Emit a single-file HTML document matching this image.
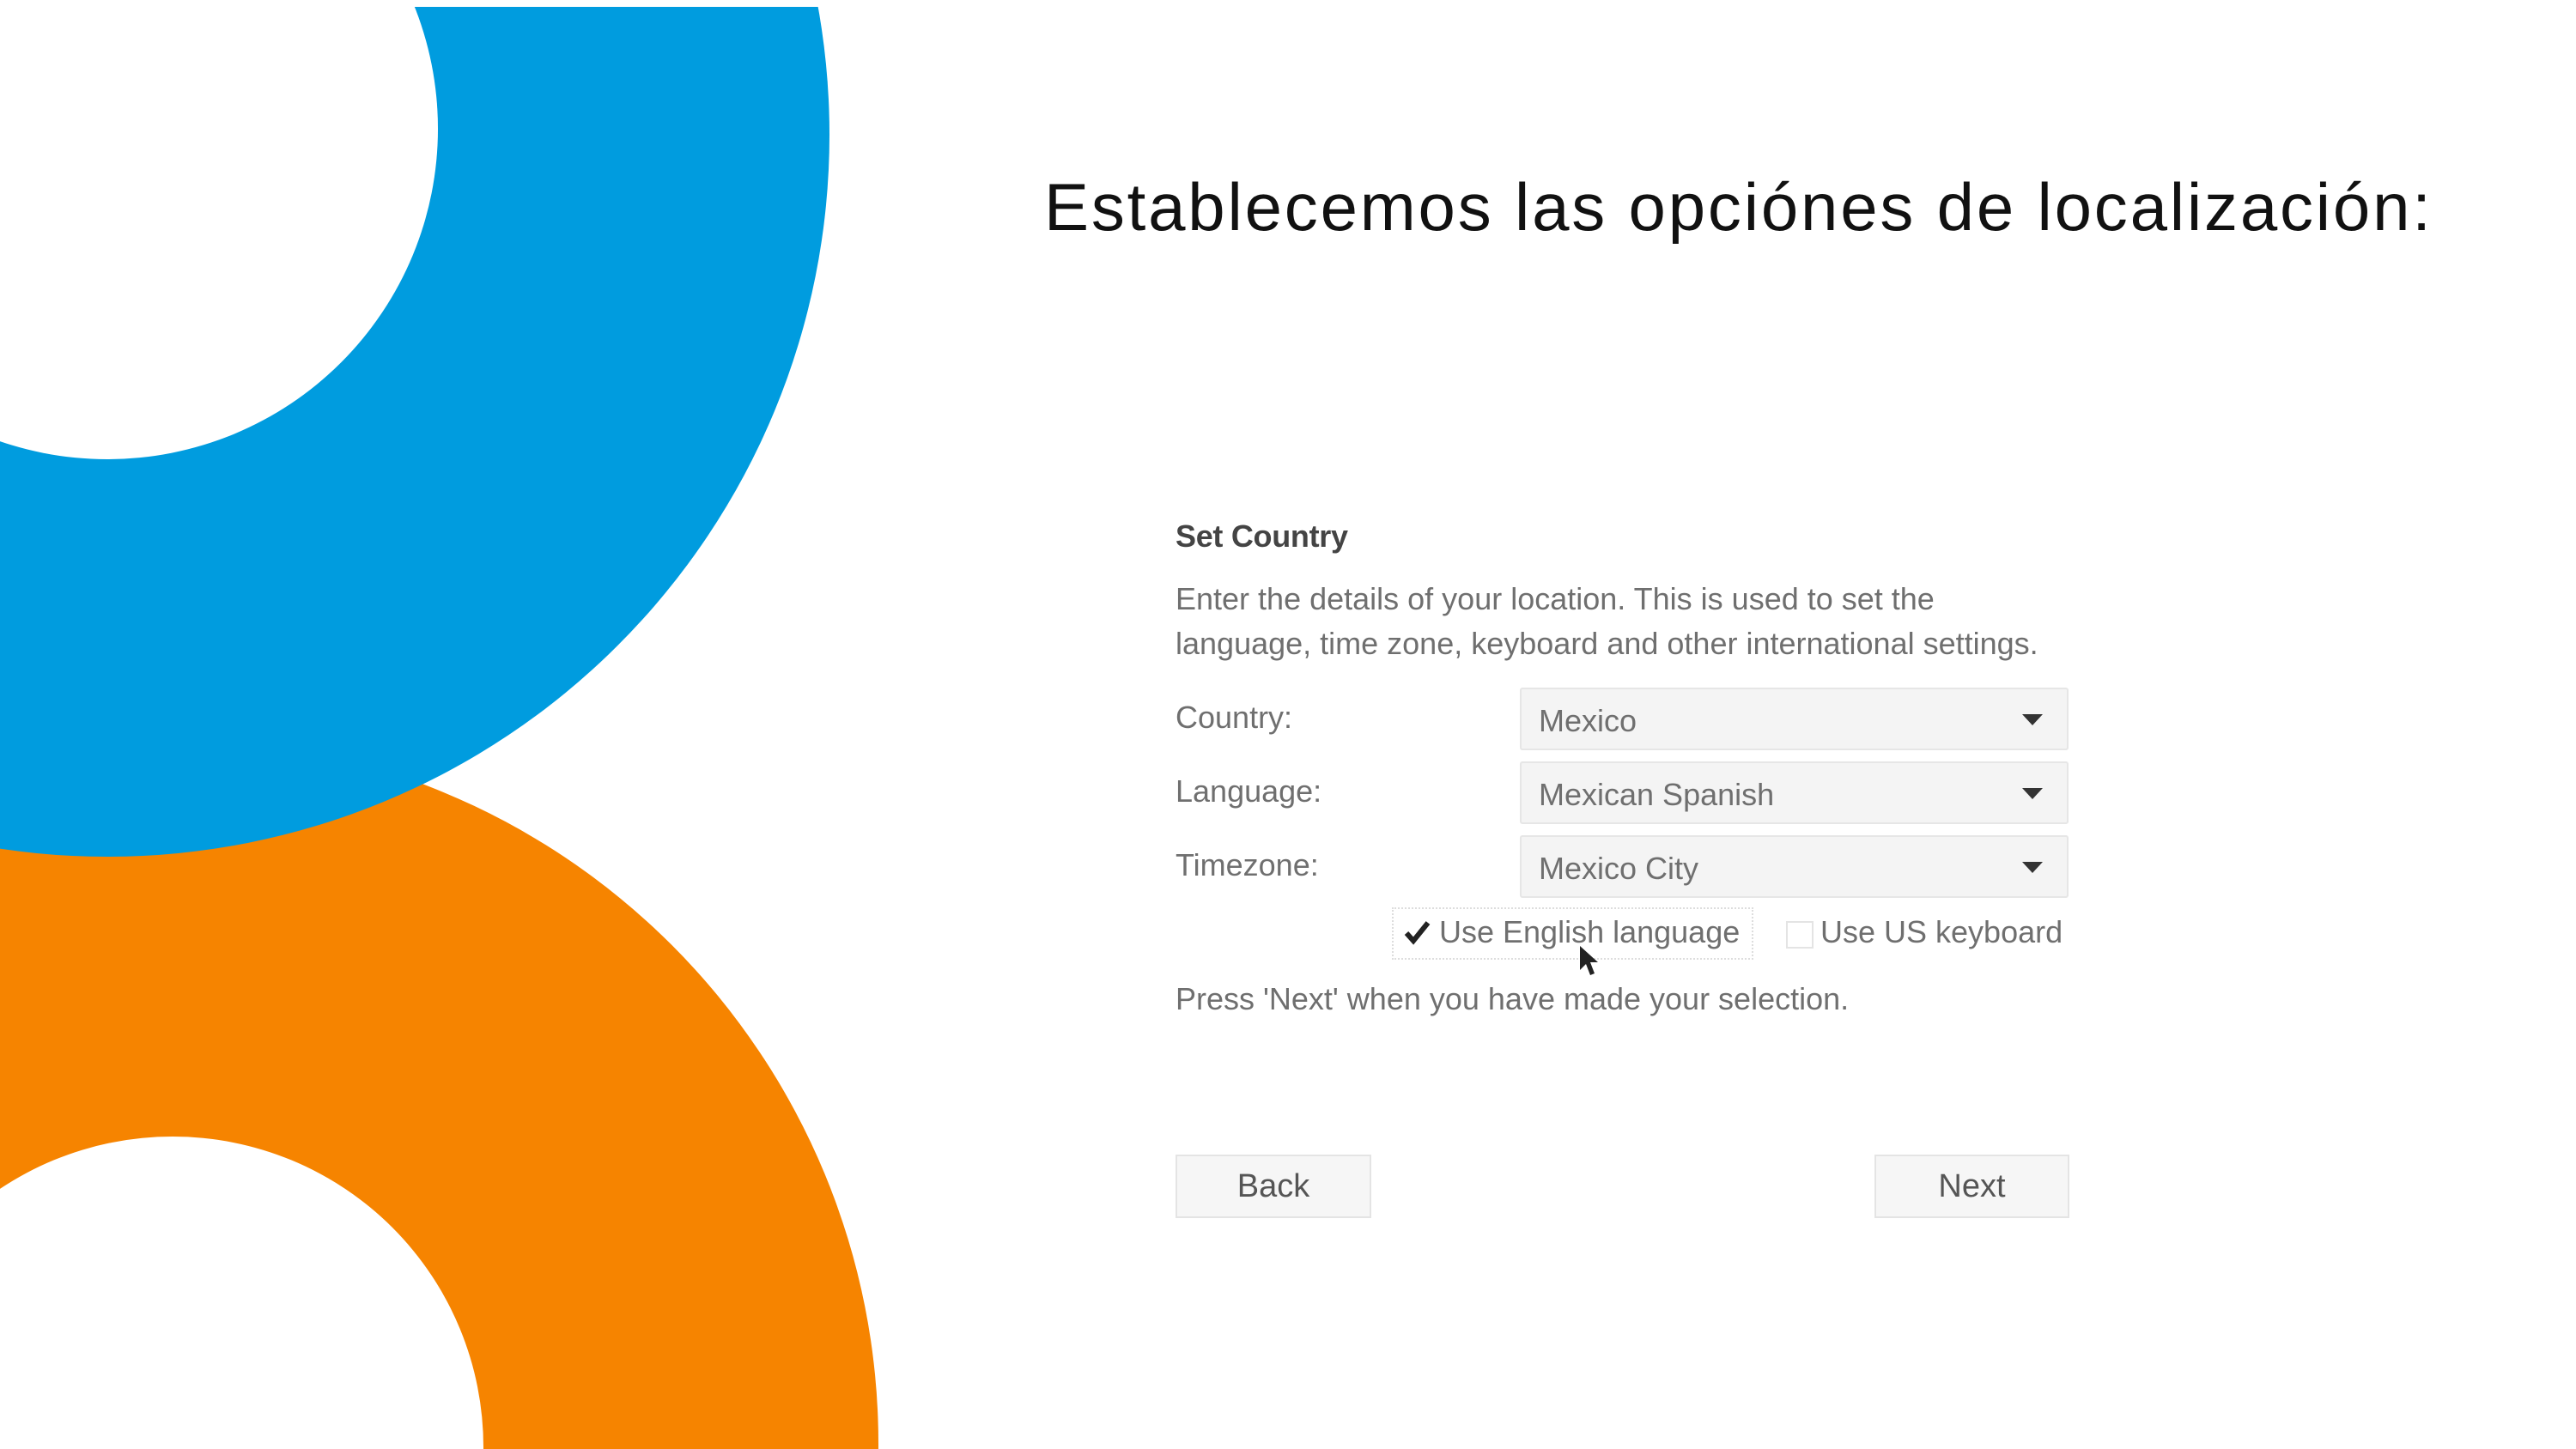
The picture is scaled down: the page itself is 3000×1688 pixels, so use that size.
<!DOCTYPE html>
<html><head><meta charset="utf-8"><style>
html,body{margin:0;padding:0;background:#fff;overflow:hidden;}
body{width:3000px;height:1688px;position:relative;overflow:hidden;font-family:"Liberation Sans",sans-serif;}
.t{position:absolute;white-space:nowrap;}
#title{left:1216px;top:196px;font-size:78px;color:#111;letter-spacing:2.8px;}
.dlg{color:#6f6f6f;font-size:36px;letter-spacing:0px;}
.box{position:absolute;background:#f4f4f4;border:2px solid #e6e6e6;border-radius:3px;box-sizing:border-box;}
.arrow{position:absolute;right:28px;top:50%;margin-top:-6px;width:0;height:0;border-left:12px solid transparent;border-right:12px solid transparent;border-top:13px solid #333;}
.btn{position:absolute;background:#f6f6f6;border:2px solid #e4e4e4;box-sizing:border-box;color:#555;font-size:38px;text-align:center;line-height:70px;}
</style></head><body>
<svg width="1100" height="1688" style="position:absolute;left:0;top:0;display:block">
<defs>
<mask id="om"><rect width="1100" height="1688" fill="#fff"/><circle cx="201" cy="1686" r="362" fill="#000"/></mask>
<mask id="bm"><rect x="0" y="8" width="1100" height="1680" fill="#fff"/><circle cx="125" cy="150" r="385" fill="#000"/></mask>
</defs>
<circle cx="201" cy="1682" r="822" fill="#f68400" mask="url(#om)"/>
<circle cx="125" cy="157" r="841" fill="#009cdf" mask="url(#bm)"/>
</svg>
<div class="t" id="title">Establecemos las opciónes de localización:</div>

<div class="t" style="left:1369px;top:604px;font-size:36px;font-weight:bold;color:#444;letter-spacing:-0.3px;">Set Country</div>
<div class="t dlg" style="left:1369px;top:677px;">Enter the details of your location. This is used to set the</div>
<div class="t dlg" style="left:1369px;top:729px;">language, time zone, keyboard and other international settings.</div>

<div class="t dlg" style="left:1369px;top:815px;">Country:</div>
<div class="box" style="left:1770px;top:801px;width:639px;height:73px;"><div class="t dlg" style="left:20px;top:16px;">Mexico</div><div class="arrow"></div></div>
<div class="t dlg" style="left:1369px;top:901px;">Language:</div>
<div class="box" style="left:1770px;top:887px;width:639px;height:73px;"><div class="t dlg" style="left:20px;top:16px;">Mexican Spanish</div><div class="arrow"></div></div>
<div class="t dlg" style="left:1369px;top:987px;">Timezone:</div>
<div class="box" style="left:1770px;top:973px;width:639px;height:73px;"><div class="t dlg" style="left:20px;top:16px;">Mexico City</div><div class="arrow"></div></div>

<div style="position:absolute;left:1621px;top:1057px;width:421px;height:61px;border:2px dotted #ddd;box-sizing:border-box;"></div>
<svg width="34" height="34" style="position:absolute;left:1634px;top:1070px"><path d="M4 17 L12 26 L29 5" fill="none" stroke="#222" stroke-width="6"/></svg>
<div class="t dlg" style="left:1676px;top:1065px;">Use English language</div>
<div style="position:absolute;left:2080px;top:1073px;width:32px;height:32px;border:2px solid #e4e4e4;box-sizing:border-box;"></div>
<div class="t dlg" style="left:2120px;top:1065px;">Use US keyboard</div>
<svg width="30" height="44" style="position:absolute;left:1838px;top:1100px"><path d="M2 2 L2 30 L9 23 L14 36 L19 34 L14 21 L23 21 Z" fill="#222"/></svg>

<div class="t dlg" style="left:1369px;top:1143px;">Press 'Next' when you have made your selection.</div>

<div class="btn" style="left:1369px;top:1345px;width:228px;height:74px;">Back</div>
<div class="btn" style="left:2183px;top:1345px;width:227px;height:74px;">Next</div>
</body></html>
